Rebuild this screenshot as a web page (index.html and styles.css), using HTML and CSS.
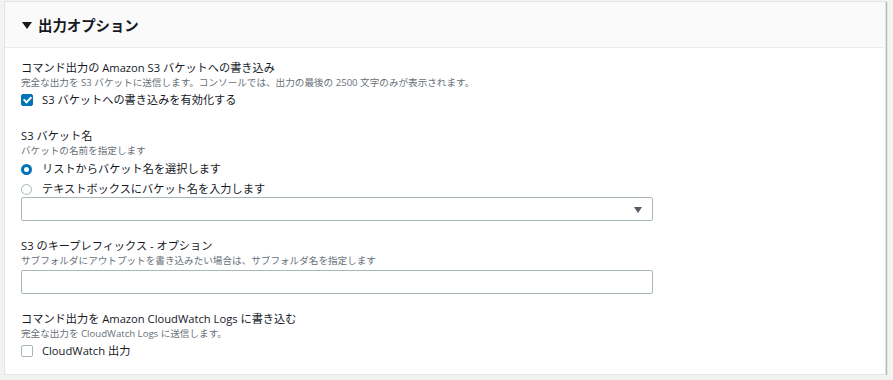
FILE: index.html
```html
<!DOCTYPE html>
<html lang="ja">
<head>
    <meta charset="UTF-8">
    <title>出力オプション</title>
    <link rel="stylesheet" href="styles.css">
</head>
<body>
    <div class="panel">
        <div class="panel-header">
            <span class="caret"></span>
            <h2>出力オプション</h2>
        </div>
        <div class="panel-body">
            <div class="field first">
                <div class="label">コマンド出力の Amazon S3 バケットへの書き込み</div>
                <div class="desc">完全な出力を S3 バケットに送信します。コンソールでは、出力の最後の 2500 文字のみが表示されます。</div>
                <label class="check"><span class="box checked"></span>S3 バケットへの書き込みを有効化する</label>
            </div>

            <div class="field">
                <div class="label">S3 バケット名</div>
                <div class="desc">バケットの名前を指定します</div>
                <div class="radio-group">
                    <label class="radio"><span class="dot selected"></span>リストからバケット名を選択します</label>
                    <label class="radio"><span class="dot"></span>テキストボックスにバケット名を入力します</label>
                </div>
                <div class="select"><span class="arrow"></span></div>
            </div>

            <div class="field">
                <div class="label">S3 のキープレフィックス - オプション</div>
                <div class="desc">サブフォルダにアウトプットを書き込みたい場合は、サブフォルダ名を指定します</div>
                <div class="input"></div>
            </div>

            <div class="field">
                <div class="label">コマンド出力を Amazon CloudWatch Logs に書き込む</div>
                <div class="desc">完全な出力を CloudWatch Logs に送信します。</div>
                <label class="check"><span class="box"></span>CloudWatch 出力</label>
            </div>
        </div>
    </div>
</body>
</html>
```

FILE: styles.css
```css
body {
    margin: 0;
    padding: 1px 7px 0 4px;
    background: #f2f3f3;
    font-family: "Open Sans", "Noto Sans CJK JP", sans-serif;
    color: #16191f;
}

.panel {
    background: white;
    border: 1px solid #e4e6e6;
    box-shadow: 1px 1px 1px rgba(0,0,0,0.25);
    height: 372px;
}

.panel-header {
    display: flex;
    align-items: center;
    height: 45px;
    padding: 0 16px;
    background: #fafafa;
    border-bottom: 1px solid #eaeded;
}

.caret {
    width: 0;
    height: 0;
    border-left: 5px solid transparent;
    border-right: 5px solid transparent;
    border-top: 7px solid #16191f;
    margin: 1px 6px 0 1px;
}

.panel-header h2 {
    margin: 0;
    font-size: 14.4px;
    font-weight: bold;
}

.panel-body {
    padding: 12px 16px 0;
}

.field {
    margin-bottom: 17px;
}

.field.first {
    margin-bottom: 18px;
}

.label {
    font-size: 11.2px;
    line-height: 16px;
}

.desc {
    font-size: 9.6px;
    line-height: 14px;
    color: #687078;
}

.check, .radio {
    display: flex;
    align-items: center;
    font-size: 11.2px;
    line-height: 20px;
}

.box {
    width: 10px;
    height: 10px;
    border: 1px solid #aab7b8;
    border-radius: 2px;
    margin-right: 9px;
    position: relative;
}

.box.checked {
    background: #0073bb;
    border-color: #0073bb;
}

.box.checked::after {
    content: "";
    position: absolute;
    left: 3px;
    top: 0px;
    width: 3px;
    height: 6px;
    border: solid white;
    border-width: 0 2px 2px 0;
    transform: rotate(45deg);
}

.radio-group {
    margin-top: 1px;
}

.radio .dot {
    width: 11px;
    height: 11px;
    border: 1px solid #aab7b8;
    border-radius: 50%;
    margin-right: 10px;
    box-sizing: border-box;
}

.radio .dot.selected {
    border: 3px solid #0073bb;
    background: white;
}

.select, .input {
    width: 630px;
    height: 22px;
    border: 1px solid #aab7b8;
    border-radius: 2px;
    position: relative;
}

.select {
    margin-top: -2px;
}

.input {
    margin-top: 2px;
}

.select .arrow {
    position: absolute;
    right: 10px;
    top: 9px;
    border-left: 4px solid transparent;
    border-right: 4px solid transparent;
    border-top: 6px solid #545b64;
}
```
